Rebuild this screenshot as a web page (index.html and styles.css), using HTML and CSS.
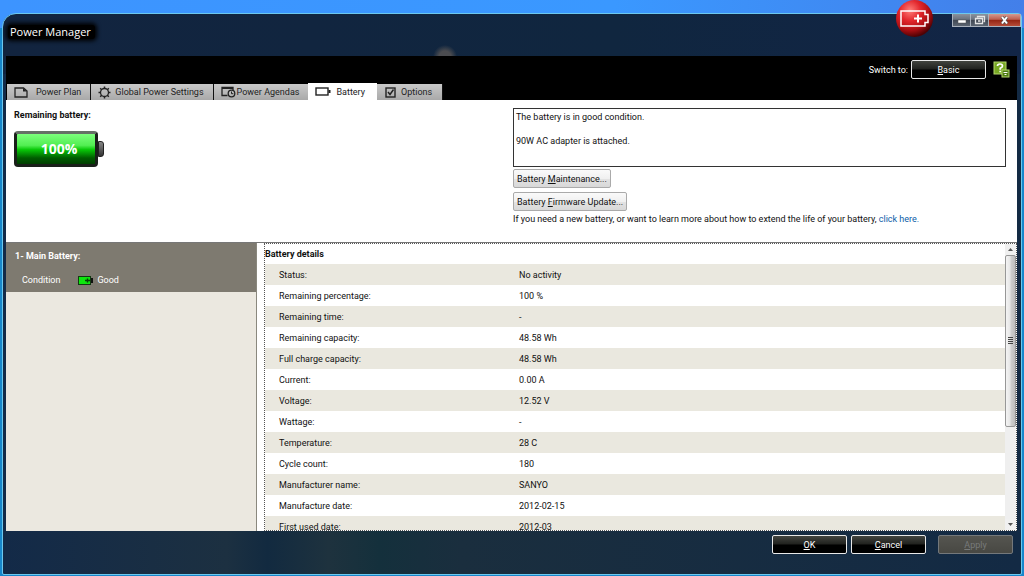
FILE: index.html
```
<!DOCTYPE html>
<html lang="en">
<head>
  <meta charset="UTF-8" />
  <meta name="viewport" content="width=device-width, initial-scale=1" />
  <title>Power Manager</title>
  <link rel="stylesheet" href="styles.css">
</head>
<body>
<div class="window">
  <header class="titlebar">
    <h1>Power Manager</h1>
    <div class="gadget">
      <svg width="37" height="37" viewBox="0 0 37 37">
        <defs>
          <radialGradient id="ball" cx="38%" cy="28%" r="72%">
            <stop offset="0" stop-color="#ff7d78" />
            <stop offset="0.4" stop-color="#e2262c" />
            <stop offset="0.75" stop-color="#a90e12" />
            <stop offset="1" stop-color="#4e0204" />
          </radialGradient>
        </defs>
        <circle cx="18.5" cy="18.5" r="18.5" fill="url(#ball)" />
        <path d="M5 11H29V14.500H32V22.500H29V26H5Z" fill="none" stroke="#fff" stroke-width="1.500" />
        <path d="M22 14.500V22.500M18 18.500H26" stroke="#fff" stroke-width="2" />
      </svg>
    </div>
    <div class="caption-buttons">
      <button class="caption" type="button" aria-label="Minimize">
        <svg width="17" height="12" viewBox="0 0 17 12"><rect x="5" y="6" width="8" height="3" fill="#fff" stroke="#555" stroke-width="0.500" /></svg>
      </button>
      <button class="caption" type="button" aria-label="Restore">
        <svg width="17" height="12" viewBox="0 0 17 12"><path d="M6.500 3.500V2.500H13.500V7.500H12.500M4.500 4.500H11.500V9.500H4.500ZM7 7H9.500" fill="none" stroke="#e4e4e4" stroke-width="1.300" /></svg>
      </button>
      <button class="caption caption-close" type="button" aria-label="Close">
        <svg width="31" height="12" viewBox="0 0 31 12"><path d="M13 3L18 9.500M18 3L13 9.500" stroke="#555" stroke-width="3.200" /><path d="M13 3L18 9.500M18 3L13 9.500" stroke="#fff" stroke-width="2" /></svg>
      </button>
    </div>
  </header>

  <div class="topbar">
    <div class="switch">
      <span>Switch to:</span>
      <button class="dark-button" type="button"><u>B</u>asic</button>
      <button class="help" type="button" aria-label="Help">
        <svg width="17" height="17" viewBox="0 0 17 17">
          <rect x="1" y="1" width="12" height="12" fill="#78a824" stroke="#b4d66c" />
          <path d="M4.500 5Q4.500 3 7 3T9.500 5Q9.500 6.300 7.200 7.300V8.700M7.200 9.700V11.300" fill="none" stroke="#fff" stroke-width="1.700" />
          <rect x="9" y="9" width="7" height="7" fill="#4f7c12" stroke="#b4d66c" />
          <path d="M10.500 11.500H14.500M11.500 13.500H13.500" stroke="#fff" />
        </svg>
      </button>
    </div>
    <nav class="tabs">
      <button class="tab tab-plan" type="button">
        <svg width="14" height="11" viewBox="0 0 14 11"><path d="M1 1H9.500L13 4V10H1Z" fill="none" stroke="#222" stroke-width="1.300" /><path d="M9 1L13 4.500H9Z" fill="#222" /></svg>
        Power Plan
      </button>
      <button class="tab tab-global" type="button">
        <svg width="13" height="13" viewBox="0 0 13 13"><circle cx="6.500" cy="6.500" r="4" fill="none" stroke="#222" stroke-width="1.300" /><path d="M6.500 0.500V2.500M6.500 10.500V12.500M0.500 6.500H2.500M10.500 6.500H12.500M2.200 2.200L3.700 3.700M9.300 9.300L10.800 10.800M10.800 2.200L9.300 3.700M3.700 9.300L2.200 10.800" stroke="#222" stroke-width="1.500" /></svg>
        Global Power Settings
      </button>
      <button class="tab tab-agendas" type="button">
        <svg width="15" height="12" viewBox="0 0 15 12"><path d="M6.500 9.500H1V1.500H12V4" fill="none" stroke="#222" stroke-width="1.300" /><path d="M1 2H12" stroke="#222" stroke-width="2" /><circle cx="10.500" cy="7.500" r="3.300" fill="none" stroke="#222" stroke-width="1.300" /><path d="M10.500 5.500V7.700H12.300" fill="none" stroke="#222" /></svg>
        Power Agendas
      </button>
      <button class="tab tab-battery active" type="button">
        <svg width="16" height="9" viewBox="0 0 16 9"><rect x="1" y="1" width="12" height="7" fill="none" stroke="#222" stroke-width="1.400" /><rect x="13.500" y="3" width="2" height="3" fill="#222" /></svg>
        Battery
      </button>
      <button class="tab tab-options" type="button">
        <svg width="11" height="11" viewBox="0 0 11 11"><rect x="1" y="1" width="9" height="9" fill="none" stroke="#222" stroke-width="1.400" /><path d="M3 5L5 7.500L8.500 2.500" fill="none" stroke="#222" stroke-width="1.500" /></svg>
        Options
      </button>
    </nav>
  </div>

  <section class="summary">
    <div class="remaining">
      <h2>Remaining battery:</h2>
      <div class="gauge">
        <span class="gauge-body">100%</span>
        <span class="gauge-tip"></span>
      </div>
    </div>
    <div class="health">
      <div class="message">
        <p>The battery is in good condition.</p>
        <p>90W AC adapter is attached.</p>
      </div>
      <button class="light-button" type="button">Battery <u>M</u>aintenance...</button>
      <button class="light-button" type="button">Battery <u>F</u>irmware Update...</button>
      <p class="hint">If you need a new battery, or want to learn more about how to extend the life of your battery, <a href="#">click here.</a></p>
    </div>
  </section>

  <main class="lower">
    <aside class="batteries">
      <div class="battery-item">
        <h3>1- Main Battery:</h3>
        <div class="condition">
          <span>Condition</span>
          <svg width="15" height="9" viewBox="0 0 15 9"><rect x="0.500" y="0.500" width="12" height="8" fill="#0ee60e" stroke="#123b12" /><rect x="13" y="2" width="2" height="5" fill="#111" /><path d="M9.500 2.500V6.500M7 4.500H12" stroke="#073f07" stroke-width="1.400" /></svg>
          <span>Good</span>
        </div>
      </div>
    </aside>
    <div class="details">
      <div class="details-content">
        <h3>Battery details</h3>
        <table>
          <tbody>
            <tr><th scope="row">Status:</th><td>No activity</td></tr>
            <tr><th scope="row">Remaining percentage:</th><td>100 %</td></tr>
            <tr><th scope="row">Remaining time:</th><td>-</td></tr>
            <tr><th scope="row">Remaining capacity:</th><td>48.58 Wh</td></tr>
            <tr><th scope="row">Full charge capacity:</th><td>48.58 Wh</td></tr>
            <tr><th scope="row">Current:</th><td>0.00 A</td></tr>
            <tr><th scope="row">Voltage:</th><td>12.52 V</td></tr>
            <tr><th scope="row">Wattage:</th><td>-</td></tr>
            <tr><th scope="row">Temperature:</th><td>28 C</td></tr>
            <tr><th scope="row">Cycle count:</th><td>180</td></tr>
            <tr><th scope="row">Manufacturer name:</th><td>SANYO</td></tr>
            <tr><th scope="row">Manufacture date:</th><td>2012-02-15</td></tr>
            <tr><th scope="row">First used date:</th><td>2012-03</td></tr>
          </tbody>
        </table>
      </div>
      <div class="scrollbar">
        <button class="arrow" type="button" aria-label="Scroll up"><svg width="5" height="3" viewBox="0 0 5 3"><path d="M0 3L2.500 0L5 3Z" fill="#555" /></svg></button>
        <div class="track"><div class="thumb"><svg width="5" height="7" viewBox="0 0 5 7"><path d="M0 0.500H5M0 2.500H5M0 4.500H5M0 6.500H5" stroke="#444" /></svg></div></div>
        <button class="arrow" type="button" aria-label="Scroll down"><svg width="5" height="3" viewBox="0 0 5 3"><path d="M0 0L2.500 3L5 0Z" fill="#555" /></svg></button>
      </div>
    </div>
  </main>

  <footer class="actions">
    <button class="dark-button" type="button"><u>O</u>K</button>
    <button class="dark-button" type="button"><u>C</u>ancel</button>
    <button class="dark-button apply" type="button" disabled><u>A</u>pply</button>
  </footer>
</div>
</body>
</html>
```
FILE: styles.css
```
* {
  box-sizing: border-box;
}
body {
  margin: 0;
  height: 100vh;
  padding: 13px 2px 1px;
  background: linear-gradient(to right, #3d94ff, #3a98ff 60%, #437fe9) top / 100% 28px no-repeat, #1787cb;
  font-family: Roboto, "Open Sans", sans-serif;
  font-size: 9px;
  line-height: 12px;
  color: #111;
}
h1, h2, h3, p {
  margin: 0;
}
button {
  font: inherit;
  padding: 0;
  border: none;
}
svg {
  display: block;
  flex: none;
}
.window {
  position: relative;
  height: 100%;
  display: flex;
  flex-direction: column;
  padding: 0 4px 0 3px;
  border: 1px solid #6cc8ee;
  border-radius: 14px 4px 2px 2px;
  background: linear-gradient(to right, #12243f, #10263f 60%, #122546) top / 100% 60px no-repeat,
    linear-gradient(to right, #132a48, #1c3041 22%, #122a40 26%, #1e323e 32%, #14303c 37%, #1a2e3e 45%, #132a44);
}
.titlebar {
  display: flex;
  justify-content: space-between;
  align-items: flex-start;
  height: 42px;
  background: radial-gradient(circle at 439px 43px, #4b4c50 6px, #4b4c5000 12px);
}
h1 {
  margin: 11px 0 0 2px;
  padding: 0 4px 0 2px;
  border-radius: 3px;
  background: #000;
  box-shadow: 0 0 4px 2px #000;
  color: #fff;
  font-family: "Open Sans", sans-serif;
  font-size: 11px;
  line-height: 14px;
  font-weight: normal;
}
/* the red ball floats over the window's top edge */
.gadget {
  position: absolute;
  top: -14px;
  right: 88px;
}
.caption-buttons {
  display: flex;
  align-items: flex-start;
  margin-right: -4px;
}
.caption {
  height: 13px;
  border: 1px solid #aab2bd;
  border-top: none;
  background: linear-gradient(#8b929d, #6a727e 45%, #404753 50%, #5c6571);
}
.caption + .caption {
  border-left: none;
}
.caption-close {
  background: linear-gradient(#d49a90, #bd5f50 45%, #932413 50%, #b54c38);
}
.topbar {
  display: flex;
  flex-direction: column;
  justify-content: space-between;
  height: 44px;
  background: #000;
}
.switch {
  display: flex;
  align-items: center;
  justify-content: flex-end;
  padding: 4px 7px 0 0;
  color: #fff;
}
.dark-button {
  width: 75px;
  height: 19px;
  border: 1px solid #e8e8e8;
  border-radius: 2px;
  background: linear-gradient(#42443f, #20211e 48%, #000 52%);
  color: #fff;
}
.switch .dark-button {
  margin: 0 7px 0 3px;
}
.help {
  background: none;
}
.tabs {
  display: flex;
  align-items: flex-end;
  padding-left: 1px;
}
.tab {
  display: flex;
  align-items: center;
  height: 16px;
  padding: 0 9px 0 7px;
  border-right: 1px solid #111;
  background: linear-gradient(#c9c9c9, #a9a9a9);
  color: #222;
}
.tab-plan {
  gap: 8px;
}
.tab-global {
  gap: 4px;
}
.tab-agendas {
  gap: 1px;
  border-right: none;
}
.tab-battery, .tab-options {
  gap: 5px;
}
.tab.active {
  height: 17px;
  padding-right: 12px;
  border-right: none;
  background: #fff;
}
.tab-options {
  padding: 0 10px 0 8px;
}
.summary {
  display: grid;
  grid-template-columns: 507px 1fr;
  height: 142px;
  background: #fff;
}
.remaining {
  padding: 9px 8px;
}
h2, h3 {
  font-size: 9px;
  font-weight: bold;
}
.gauge {
  display: flex;
  align-items: center;
  margin-top: 10px;
}
.gauge-body {
  width: 84px;
  height: 36px;
  padding-left: 6px;
  border: 3px solid #1a201a;
  border-top-color: #667066;
  border-radius: 4px;
  background: linear-gradient(#7cff7c, #52ee52 38%, #08c808 52%, #005c00 80%, #003f00);
  color: #fff;
  font-family: "Open Sans", sans-serif;
  font-size: 14px;
  line-height: 30px;
  font-weight: bold;
  text-align: center;
}
.gauge-tip {
  width: 6px;
  height: 16px;
  border: 1px solid #222;
  border-radius: 0 3px 3px 0;
  background: linear-gradient(#888, #333);
}
.health {
  display: flex;
  flex-direction: column;
  align-items: flex-start;
  padding: 8px 11px 0 0;
}
.message {
  display: flex;
  flex-direction: column;
  gap: 12px;
  width: 100%;
  height: 59px;
  padding: 2px;
  border: 1px solid #333;
}
.light-button {
  height: 19px;
  margin-top: 2px;
  padding: 0 3px;
  border: 1px solid #aaa;
  border-radius: 2px;
  background: linear-gradient(#fafafa, #f0f0f0 50%, #e2e2e2 55%, #d8d8d8);
  color: #111;
}
.light-button + .light-button {
  margin-top: 4px;
}
.hint {
  margin-top: 2px;
}
.hint a {
  color: #0b5da8;
  text-decoration: none;
}
.lower {
  flex: 1;
  min-height: 0;
  display: grid;
  grid-template-columns: 251px 1fr;
  gap: 7px;
  border-top: 1px solid #777;
  background: #fff;
}
.batteries {
  border-right: 1px solid #8a887e;
  background: #ebe8e0;
}
.battery-item {
  height: 49px;
  padding: 7px 9px;
  background: #7e7a70;
  color: #fff;
}
.condition {
  display: flex;
  align-items: center;
  gap: 4px;
  margin-top: 12px;
  padding-left: 7px;
}
.condition svg {
  margin-left: 14px;
}
.details {
  min-height: 0;
  display: flex;
  border: 1px dotted #555;
  overflow: hidden;
}
.details-content {
  flex: 1;
}
.details h3 {
  line-height: 20px;
}
table {
  width: 100%;
  border-collapse: collapse;
}
tr:nth-child(odd) {
  background: #eae8df;
}
th, td {
  height: 21px;
  padding: 0;
  text-align: left;
  font-weight: normal;
}
th {
  width: 254px;
  padding-left: 14px;
}
.scrollbar {
  display: flex;
  flex-direction: column;
  width: 11px;
  background: #efefef;
}
.arrow {
  display: flex;
  align-items: center;
  justify-content: center;
  height: 11px;
  background: #f0f0f0;
}
.track {
  flex: 1;
}
.thumb {
  display: flex;
  align-items: center;
  justify-content: center;
  height: 65%;
  border: 1px solid #979797;
  border-radius: 2px;
  background: linear-gradient(to right, #f4f4f4, #e6e6e6 45%, #cfcfcf 55%, #bdbdbd);
}
.actions {
  display: flex;
  justify-content: flex-end;
  gap: 4px;
  height: 43px;
  padding: 4px 4px 0 0;
}
.apply {
  margin-left: 8px;
  border-color: #74787b;
  background: linear-gradient(#555550, #484843);
  color: #777a7a;
}
```
